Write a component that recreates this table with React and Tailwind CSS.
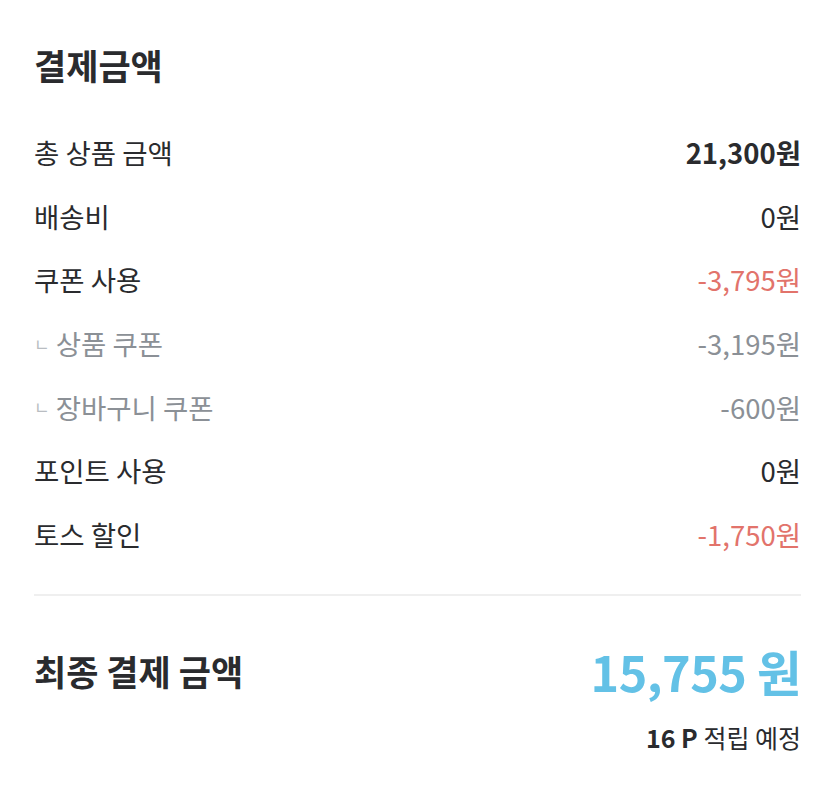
const rows = [
  { label: '총 상품 금액', value: '21,300원', kind: 'strong' },
  { label: '배송비', value: '0원', kind: 'normal' },
  { label: '쿠폰 사용', value: '-3,795원', kind: 'discount' },
  { label: '상품 쿠폰', value: '-3,195원', kind: 'sub' },
  { label: '장바구니 쿠폰', value: '-600원', kind: 'sub' },
  { label: '포인트 사용', value: '0원', kind: 'normal' },
  { label: '토스 할인', value: '-1,750원', kind: 'discount' },
];

const valueClass = {
  strong: 'font-bold text-[#2a2b2e]',
  normal: 'text-[#2a2b2e]',
  discount: 'text-[#e2736b]',
  sub: 'text-[#8b9096]',
};

const App = () => (
  <div
    className="min-h-screen bg-white px-[34px] pt-[40px] text-[#2a2b2e]"
    style={{ fontFamily: '"Noto Sans CJK KR", "Noto Sans", sans-serif' }}
  >
    <h1 className="text-[35px] font-bold leading-[50px]">결제금액</h1>

    {/* Price breakdown */}
    <div className="mt-[31px]">
      {rows.map((row) => (
        <div key={row.label} className="flex h-[63.6px] items-center justify-between text-[27.5px]">
          {row.kind === 'sub' ? (
            <div className="flex items-center text-[#8b9096]">
              <span className="mr-[6px] text-[17px] text-[#b9bdc2]">ㄴ</span>
              <span>{row.label}</span>
            </div>
          ) : (
            <span>{row.label}</span>
          )}
          <span className={valueClass[row.kind]}>{row.value}</span>
        </div>
      ))}
    </div>

    <div className="mt-[28px] h-[2px] bg-[#efefef]" />

    {/* Final total */}
    <div className="mt-[43px] flex h-[64px] items-center justify-between">
      <span className="text-[35px] font-bold">최종 결제 금액</span>
      <span className="text-[48.5px] font-semibold tracking-[-0.5px] text-[#63c1e6]">15,755 원</span>
    </div>
    <div className="mt-[19px] text-right text-[25px] leading-[30px]">
      <span className="font-bold">16 P</span> 적립 예정
    </div>
  </div>
);

export default App;
